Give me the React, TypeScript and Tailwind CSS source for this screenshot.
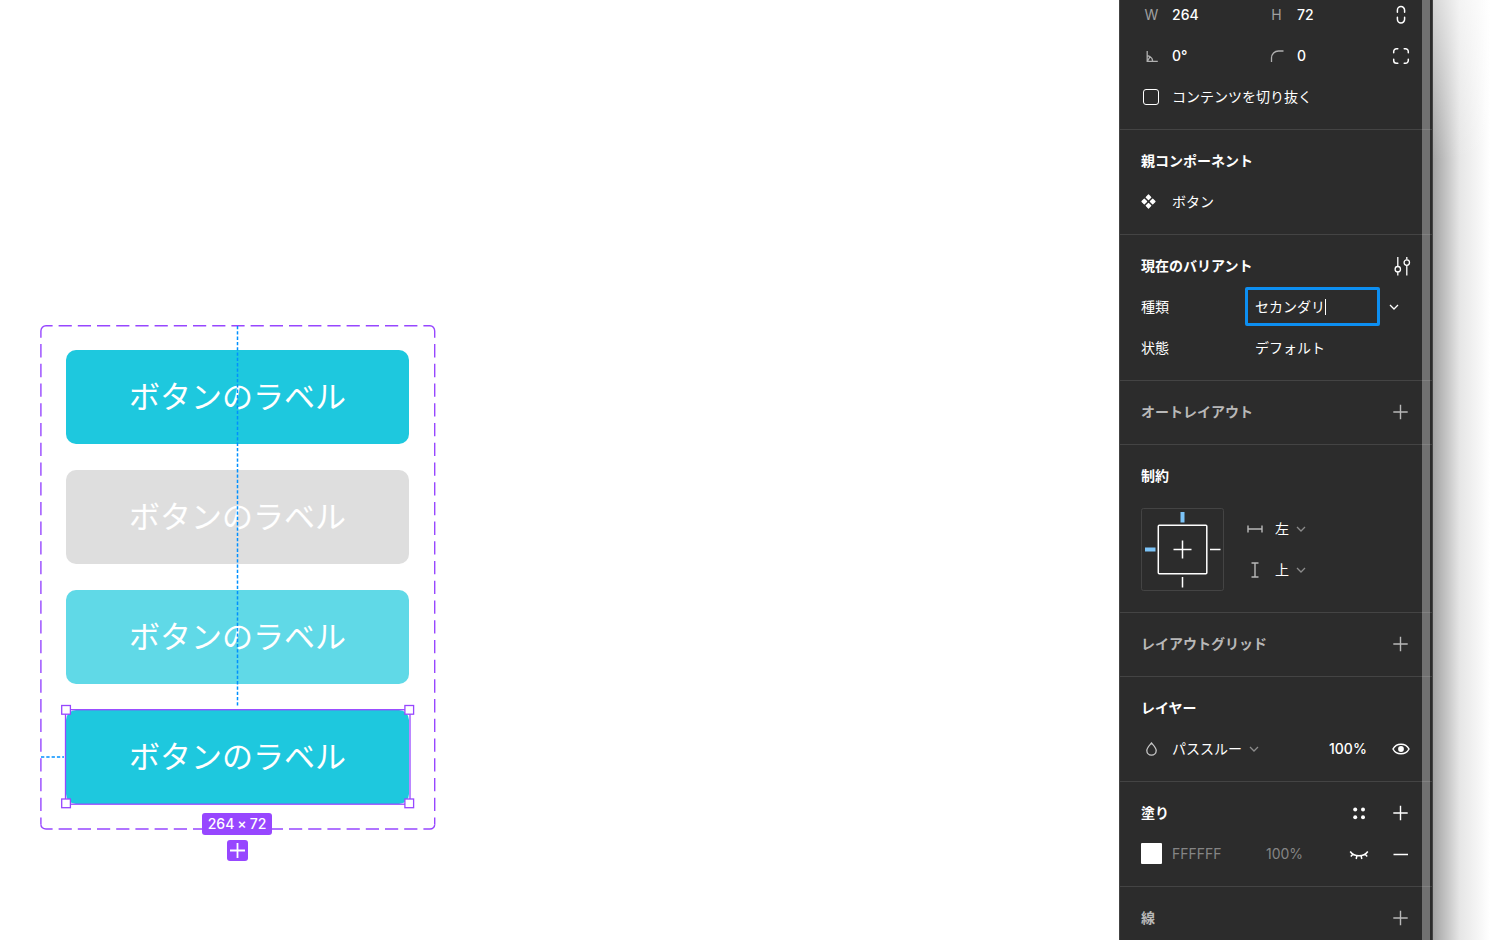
import type { ReactNode } from "react";

const PURPLE = "#9747ff";

function Row({ children }: { children?: ReactNode }) {
  return <div className="flex h-[41px] items-center">{children}</div>;
}

function Section({ children }: { children: ReactNode }) {
  return (
    <section className="border-b border-[#444444] pt-[10px] pr-[21px] pb-3 pl-[21px]">
      {children}
    </section>
  );
}

function Title({ children, muted }: { children: ReactNode; muted?: boolean }) {
  return (
    <h2 className={muted ? "flex-1 font-bold text-[#b8b8b8]" : "flex-1 font-bold text-white"}>
      {children}
    </h2>
  );
}

function IconButton({ label, children }: { label: string; children: ReactNode }) {
  return (
    <button type="button" aria-label={label} className="flex size-5 shrink-0 items-center justify-center">
      {children}
    </button>
  );
}

function Plus({ label, muted }: { label: string; muted?: boolean }) {
  return (
    <IconButton label={label}>
      <svg width="20" height="20" viewBox="0 0 20 20" fill="none" stroke={muted ? "#b8b8b8" : "#fff"} strokeWidth="1.4">
        <path d="M9.5 2.8v14.400M2.300 10h14.400" />
      </svg>
    </IconButton>
  );
}

function Chevron({ muted }: { muted?: boolean }) {
  return (
    <svg className="pointer-events-none shrink-0" width="10" height="8" viewBox="0 0 10 8" fill="none" stroke={muted ? "#8c8c8c" : "#fff"} strokeWidth="1.3">
      <path d="M1 2l4 4 4-4" />
    </svg>
  );
}

function Field({ id, icon, label, value, width }: { id: string; icon: ReactNode; label: string; value: string; width: string }) {
  return (
    <div className={width}>
      <label htmlFor={id} aria-label={label} className="flex w-[21px] shrink-0 items-center justify-center text-[#a0a0a0]">
        {icon}
      </label>
      <input id={id} defaultValue={value} className="ml-[10px] w-12 bg-transparent font-medium text-white outline-none" />
    </div>
  );
}

function Picker({ label, options, muted }: { label: string; options: string[]; muted?: boolean }) {
  return (
    <div className="flex items-center gap-[7px]">
      <select aria-label={label} className="field-sizing-content appearance-none bg-transparent text-white outline-none">
        {options.map((o) => (
          <option key={o}>{o}</option>
        ))}
      </select>
      <Chevron muted={muted} />
    </div>
  );
}

function Inspector() {
  return (
    <aside className="relative flex h-screen w-[314px] shrink-0 overflow-hidden border-x border-[#444444] bg-[#2c2c2c] text-sm leading-5 text-white">
      <div className="-mt-4 min-w-0 flex-1">
        <Section>
          <Row>
            <Field id="w" label="幅" icon="W" value="264" width="flex w-[125px] items-center" />
            <Field id="h" label="高さ" icon="H" value="72" width="flex flex-1 items-center" />
            <IconButton label="縦横比を固定">
              <svg width="20" height="20" viewBox="0 0 20 20" fill="none" stroke="#fff" strokeWidth="1.500" strokeLinecap="round">
                <path d="M6.400 7.200V5.200a3.600 3.600 0 0 1 7.200 0v2M6.400 12.300v2a3.600 3.600 0 0 0 7.200 0v-2" />
              </svg>
            </IconButton>
          </Row>
          <Row>
            <Field
              id="rot"
              label="回転"
              value="0°"
              width="flex w-[125px] items-center"
              icon={
                <svg width="14" height="14" viewBox="0 0 14 14" fill="none" stroke="#b0b0b0" strokeWidth="1.300">
                  <path d="M2.200 2v10.300h10.600M2.500 6.500l2.600 1.200c1.600.9 2.500 2.300 2.500 4.600M2.500 12l2.600-4.300" />
                </svg>
              }
            />
            <Field
              id="radius"
              label="角の半径"
              value="0"
              width="flex flex-1 items-center"
              icon={
                <svg width="14" height="14" viewBox="0 0 14 14" fill="none" stroke="#b0b0b0" strokeWidth="1.300">
                  <path d="M1.500 13V9a7 7 0 0 1 7-7H13.500" />
                </svg>
              }
            />
            <IconButton label="個別の角">
              <svg width="20" height="20" viewBox="0 0 20 20" fill="none" stroke="#fff" strokeWidth="1.500" strokeLinecap="round">
                <path d="M2.700 6.800V5.500a2.800 2.800 0 0 1 2.800-2.800H6.800M13.200 2.700h1.300a2.800 2.800 0 0 1 2.800 2.800V6.800M17.300 13.200v1.300a2.800 2.800 0 0 1-2.800 2.800H13.200M6.800 17.300H5.500a2.800 2.800 0 0 1-2.800-2.800V13.200" />
              </svg>
            </IconButton>
          </Row>
          <Row>
            <input id="clip" type="checkbox" className="ml-[2px] size-4 appearance-none rounded-[3px] border border-white" />
            <label htmlFor="clip" className="ml-[13px]">コンテンツを切り抜く</label>
          </Row>
        </Section>

        <Section>
          <Row>
            <Title>親コンポーネント</Title>
          </Row>
          <Row>
            <svg width="15" height="15" viewBox="0 0 15 15" fill="#fff" stroke="#fff" strokeWidth="1.200" strokeLinejoin="round">
              <path d="M7.500 1l2.300 2.300-2.300 2.300-2.300-2.300zM7.500 9.400l2.300 2.300-2.300 2.300-2.300-2.300zM3.300 5.200l2.300 2.300-2.300 2.300L1 7.500zM11.700 5.200L14 7.500l-2.300 2.300-2.300-2.300z" />
            </svg>
            <span className="ml-4">ボタン</span>
          </Row>
        </Section>

        <Section>
          <Row>
            <Title>現在のバリアント</Title>
            <IconButton label="バリアントの設定">
              <svg width="20" height="20" viewBox="0 0 20 20" fill="none" stroke="#fff" strokeWidth="1.300">
                <path d="M6.800 1v9.500M6.800 15.500v4M15.800 1v2.500M15.800 9v10.500" />
                <circle cx="6.800" cy="13.200" r="2.700" />
                <circle cx="15.800" cy="6.600" r="2.700" />
              </svg>
            </IconButton>
          </Row>
          <Row>
            <label htmlFor="kind" className="w-[104px]">種類</label>
            <div className="flex h-[39px] w-[135px] items-center rounded-[2px] border-[3px] border-[#0d8ff2] pl-[7px]">
              <input id="kind" defaultValue="セカンダリ" className="field-sizing-content bg-transparent text-white outline-none" />
              <span className="h-4 w-px bg-white" />
            </div>
            <button type="button" aria-label="種類の候補" className="ml-[9px]">
              <Chevron />
            </button>
          </Row>
          <Row>
            <label htmlFor="state" className="w-[104px]">状態</label>
            <select id="state" className="ml-[10px] appearance-none bg-transparent text-white outline-none">
              <option>デフォルト</option>
            </select>
          </Row>
        </Section>

        <Section>
          <Row>
            <Title muted>オートレイアウト</Title>
            <Plus label="オートレイアウトを追加" muted />
          </Row>
        </Section>

        <Section>
          <Row>
            <Title>制約</Title>
          </Row>
          <div className="flex pt-3 pb-[9px]">
            <svg width="83" height="83" viewBox="0 0 83 83" fill="none">
              <rect x="0.500" y="0.500" width="82" height="82" rx="2" stroke="#444" />
              <rect x="17.300" y="17.300" width="48.500" height="48.500" rx="1" stroke="#fff" strokeWidth="1.500" />
              <path d="M41.500 32.500v18M32.500 41.500h18" stroke="#fff" strokeWidth="1.500" />
              <path d="M41.500 69v10.500M69 41.500h10.500" stroke="#fff" strokeWidth="1.500" />
              <path d="M41.500 4v10.500M4 41.500h10.500" stroke="#7cc4f8" strokeWidth="4" />
            </svg>
            <div className="ml-[23px]">
              <Row>
                <svg className="mr-3" width="16" height="16" viewBox="0 0 16 16" fill="none" stroke="#b8b8b8" strokeWidth="1.400">
                  <path d="M1 4.500v7M15 4.500v7M1 8h14" />
                </svg>
                <Picker label="水平方向の制約" options={["左"]} muted />
              </Row>
              <Row>
                <svg className="mr-3" width="16" height="16" viewBox="0 0 16 16" fill="none" stroke="#b8b8b8" strokeWidth="1.400">
                  <path d="M4.500 1h7M4.500 15h7M8 1v14" />
                </svg>
                <Picker label="垂直方向の制約" options={["上"]} muted />
              </Row>
            </div>
          </div>
        </Section>

        <Section>
          <Row>
            <Title muted>レイアウトグリッド</Title>
            <Plus label="レイアウトグリッドを追加" muted />
          </Row>
        </Section>

        <Section>
          <Row>
            <Title>レイヤー</Title>
          </Row>
          <Row>
            <svg className="mr-[10px]" width="21" height="16" viewBox="0 0 21 16" fill="none" stroke="#c8c8c8" strokeWidth="1.300">
              <path d="M10.500 2C8.500 4.300 5.800 6.800 5.800 9.500a4.700 4.700 0 0 0 9.400 0C15.200 6.800 12.500 4.300 10.500 2z" />
            </svg>
            <Picker label="描画モード" options={["パススルー"]} muted />
            <input aria-label="レイヤーの不透明度" defaultValue="100%" className="ml-auto w-[42px] bg-transparent font-medium text-white outline-none" />
            <span className="w-5" />
            <IconButton label="表示">
              <svg width="20" height="20" viewBox="0 0 20 20" fill="none" stroke="#fff" strokeWidth="1.500">
                <path d="M2 10C3.600 6.900 6.500 5.200 10 5.200s6.400 1.700 8 4.800c-1.600 3.100-4.500 4.800-8 4.800S3.600 13.100 2 10z" />
                <circle cx="10" cy="10" r="2.900" fill="#fff" stroke="none" />
              </svg>
            </IconButton>
          </Row>
        </Section>

        <Section>
          <Row>
            <Title>塗り</Title>
            <IconButton label="スタイル">
              <svg width="20" height="20" viewBox="0 0 20 20" fill="#fff">
                <circle cx="6.200" cy="6.500" r="2" />
                <circle cx="14" cy="6.500" r="2" />
                <circle cx="6.200" cy="14.300" r="2" />
                <circle cx="14" cy="14.300" r="2" />
              </svg>
            </IconButton>
            <span className="w-[22px]" />
            <Plus label="塗りを追加" />
          </Row>
          <Row>
            <button type="button" aria-label="塗りの色" className="size-[21px] shrink-0 rounded-[1px] bg-white" />
            <input aria-label="カラーコード" defaultValue="FFFFFF" className="ml-[10px] w-[94px] bg-transparent text-[#858585] outline-none" />
            <input aria-label="塗りの不透明度" defaultValue="100%" className="w-12 bg-transparent text-[#858585] outline-none" />
            <span className="flex-1" />
            <IconButton label="非表示">
              <svg width="20" height="20" viewBox="0 0 20 20" fill="none" stroke="#fff" strokeWidth="1.500">
                <path d="M1.200 7.500c2 2.800 5.100 4.300 8.800 4.300s6.800-1.500 8.800-4.300M4 10.100l-2.200 2.400M7.900 11.700L7.200 15M12.100 11.700l.7 3.300M16 10.100l2.200 2.400" />
              </svg>
            </IconButton>
            <span className="w-[22px]" />
            <IconButton label="塗りを削除">
              <svg width="20" height="20" viewBox="0 0 20 20" fill="none" stroke="#fff" strokeWidth="1.500">
                <path d="M2.500 10.500h14.500" />
              </svg>
            </IconButton>
          </Row>
        </Section>

        <Section>
          <Row>
            <Title muted>線</Title>
            <Plus label="線を追加" muted />
          </Row>
        </Section>
      </div>
      <div className="absolute inset-y-0 right-[2px] w-2 bg-white/33" />
    </aside>
  );
}

function Variant({ tone }: { tone: string }) {
  return (
    <button type="button" className={tone}>
      ボタンのラベル
    </button>
  );
}

function SelectionOverlay() {
  return (
    <svg className="pointer-events-none absolute inset-0" width="396" height="506" viewBox="0 0 396 506" fill="none">
      <g stroke={PURPLE} strokeWidth="1.400">
        <path d="M6 0.700H390M6 504H390" strokeDasharray="13.200 6" strokeDashoffset="6.600" />
        <path d="M0.900 6V499.500M394.700 6V499.500" strokeDasharray="13.300 6.420" strokeDashoffset="6.600" />
        <path d="M0.900 6a5.100 5.300 0 0 1 5.100-5.300M390 0.700a4.700 5.300 0 0 1 4.700 5.300M394.700 499.500a4.700 4.500 0 0 1-4.700 4.500M6 504a5.100 4.500 0 0 1-5.100-4.500" />
      </g>
      <path d="M197.500 1V382M1 432H24" stroke="#0090ff" strokeWidth="1.500" strokeDasharray="3.300 2" />
      <g stroke={PURPLE} strokeWidth="1.300">
        <rect x="25.500" y="384.700" width="344.500" height="94.500" />
        <g fill="#fff">
          <rect x="21.700" y="380.500" width="8.700" height="8.700" />
          <rect x="364.900" y="380.500" width="8.700" height="8.700" />
          <rect x="21.700" y="474" width="8.700" height="8.700" />
          <rect x="364.900" y="474" width="8.700" height="8.700" />
        </g>
      </g>
    </svg>
  );
}

function Canvas() {
  return (
    <main className="relative h-screen min-w-0 flex-1 overflow-hidden bg-white">
      <div className="absolute top-[325px] left-10 w-[396px]">
        <div className="flex h-[506px] flex-col gap-[26px] px-[26px] pt-[25px] text-[31px] text-white">
          <Variant tone="h-[94px] w-[343px] shrink-0 rounded-[10px] bg-[#1ec8de]" />
          <Variant tone="h-[94px] w-[343px] shrink-0 rounded-[10px] bg-[#dedede]" />
          <Variant tone="h-[94px] w-[343px] shrink-0 rounded-[10px] bg-[#60d9e7]" />
          <Variant tone="h-[94px] w-[343px] shrink-0 rounded-[10px] bg-[#1ec8de]" />
        </div>
        <SelectionOverlay />
        <div className="absolute top-[488px] left-[162px] flex w-[70px] flex-col items-center gap-[5px]">
          <span className="flex h-[22px] w-full items-center justify-center gap-[3px] rounded-[3px] bg-[#9747ff] text-sm font-medium text-white">
            <span>264</span>
            <span>×</span>
            <span>72</span>
          </span>
          <button type="button" aria-label="バリアントを追加" className="size-[21px] rounded-[3px] bg-[#9747ff]">
            <svg width="21" height="21" viewBox="0 0 21 21" fill="none" stroke="#fff" strokeWidth="1.800">
              <path d="M10.500 3v15M3 10.500h15" />
            </svg>
          </button>
        </div>
      </div>
    </main>
  );
}

export default function App() {
  return (
    <div className="flex h-screen overflow-hidden bg-white font-['Inter','Noto_Sans_CJK_JP',sans-serif]">
      <Canvas />
      <Inspector />
      <div className="w-[67px] shrink-0 bg-linear-to-r from-[#a3a3a3] via-[#e6e6e6] via-40% to-white to-85%">
        <div className="h-40 bg-linear-to-b from-white/55 to-transparent" />
      </div>
    </div>
  );
}
